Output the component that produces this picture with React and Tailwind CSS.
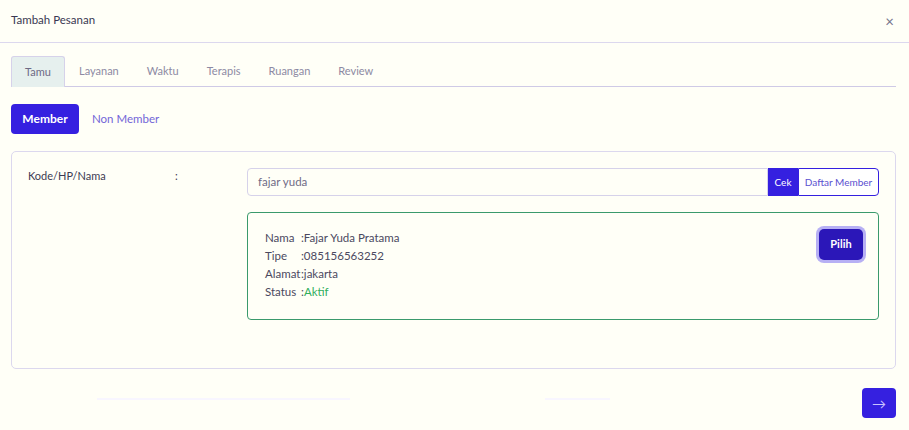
import React from "react";

export default function App() {
  const tabs = ["Tamu", "Layanan", "Waktu", "Terapis", "Ruangan", "Review"];
  return (
    <div
      className="w-[909px] h-[430px] bg-[#fffff7] text-[#3d3b52] overflow-hidden"
      style={{ fontFamily: 'Lato, "Noto Sans", sans-serif' }}
    >
      {/* header */}
      <div className="h-[43px] flex items-center justify-between pl-[11px] pr-[15px] border-b border-[#dcd8ee]">
        <span className="text-[11.5px] text-[#3a3852] -mt-[2px]">Tambah Pesanan</span>
        <span className="text-[15px] text-[#77758c] leading-none">×</span>
      </div>

      <div className="pl-[11px] pr-[13px]">
        {/* tabs */}
        <div className="mt-[14px] flex items-end border-b border-[#cfcae6] h-[30px]">
          {tabs.map((t, i) =>
            i === 0 ? (
              <div
                key={t}
                className="h-[31px] -mb-px w-[54px] flex items-center justify-center bg-[#e6f0ee] border border-b-0 border-[#d6d2ea] rounded-t-[3px] text-[11px] text-[#6d6a84]"
              >
                {t}
              </div>
            ) : (
              <div key={t} className="h-[30px] flex items-center px-[14px] text-[11px] text-[#8d8aa3]">
                {t}
              </div>
            )
          )}
        </div>

        {/* member toggle */}
        <div className="mt-[17px] flex items-center gap-[13px]">
          <button className="h-[30px] w-[68px] rounded-[4px] bg-[#3520e0] text-white text-[12px] font-bold">
            Member
          </button>
          <span className="text-[11.5px] text-[#7366d8]">Non Member</span>
        </div>

        {/* card */}
        <div className="mt-[17px] h-[218px] border border-[#dcd8ee] rounded-[5px] flex pt-[16px] pr-[16px]">
          <div className="w-[235px] flex pl-[16px] text-[11px] text-[#3d3b52]">
            <span className="w-[147px]">Kode/HP/Nama</span>
            <span>:</span>
          </div>
          <div className="flex-1 flex flex-col">
            <div className="flex h-[28px]">
              <div className="flex-1 border border-[#d6d2ea] rounded-l-[4px] flex items-center pl-[10px] text-[11.5px] text-[#6f6c86] bg-[#fffff7]">
                fajar yuda
              </div>
              <div className="w-[30px] bg-[#3520e0] text-white text-[10px] flex items-center justify-center">Cek</div>
              <div className="w-[81px] border border-[#3520e0] rounded-r-[4px] text-[10px] text-[#5a4fd0] flex items-center justify-center bg-white">
                Daftar Member
              </div>
            </div>
            <div className="mt-[16px] h-[108px] border border-[#3a9a6c] rounded-[4px] flex justify-between pl-[17px] pr-[15px] pt-[16px]">
              <div className="text-[11.5px] leading-[18px] text-[#4b495f]">
                <div className="flex"><span className="w-[36px]">Nama</span><span>:Fajar Yuda Pratama</span></div>
                <div className="flex"><span className="w-[36px]">Tipe</span><span>:085156563252</span></div>
                <div className="flex"><span className="w-[36px]">Alamat</span><span>:jakarta</span></div>
                <div className="flex"><span className="w-[36px]">Status</span><span>:<span className="text-[#2fae5c]">Aktif</span></span></div>
              </div>
              <div>
                <button className="h-[31px] w-[44px] rounded-[5px] bg-[#2b17b8] text-white text-[11px] font-bold ring-[3px] ring-[#b7b0f4]">
                  Pilih
                </button>
              </div>
            </div>
          </div>
        </div>

        {/* footer */}
        <div className="mt-[19px] flex items-start justify-between">
          <div className="flex items-center pl-[86px] gap-[195px] pt-[10px]">
            <div className="w-[253px] h-[2px] bg-[#f8f6ff]" />
            <div className="w-[65px] h-[2px] bg-[#f8f6ff]" />
          </div>
          <button className="h-[30px] w-[34px] rounded-[4px] bg-[#3520e0] text-[#c9c3ff] text-[14px] flex items-center justify-center">
            →
          </button>
        </div>
      </div>
    </div>
  );
}
